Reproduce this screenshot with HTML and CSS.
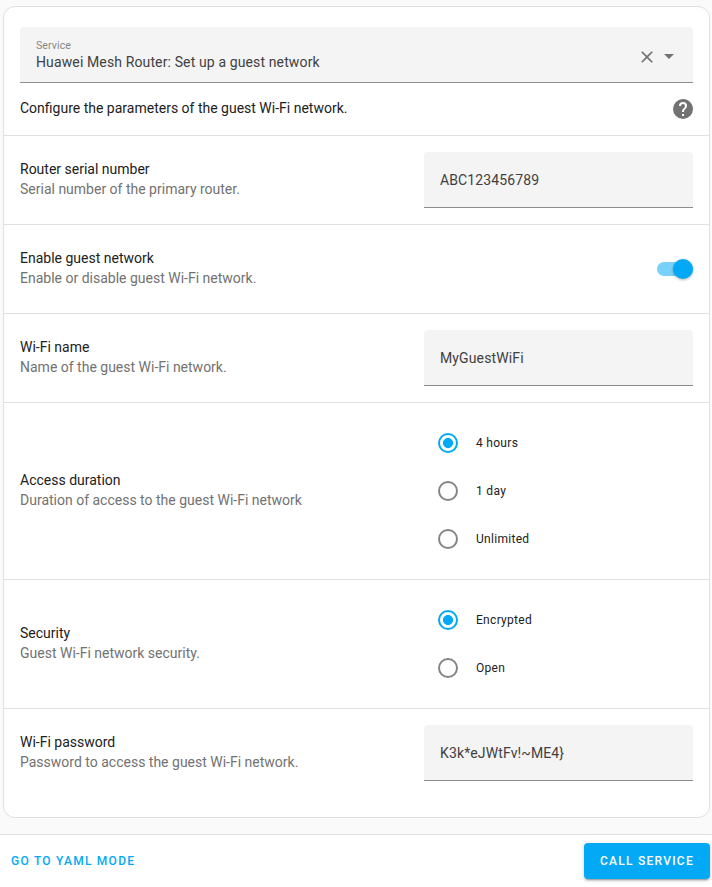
FILE: index.html
```html
<!DOCTYPE html>
<html lang="en">
<head>
<meta charset="utf-8">
<title>Call service</title>
<link rel="stylesheet" href="styles.css">
</head>
<body>
<main class="card">
  <div class="picker field">
    <div class="picker-text">
      <span class="picker-label">Service</span>
      <span class="picker-value">Huawei Mesh Router: Set up a guest network</span>
    </div>
    <svg class="clear" viewBox="0 0 24 24"><path d="M19,6.41L17.59,5L12,10.59L6.41,5L5,6.41L10.59,12L5,17.59L6.41,19L12,13.41L17.59,19L19,17.59L13.41,12L19,6.41Z"/></svg>
    <svg class="arrow" viewBox="0 0 24 24"><path d="M7,10L12,15L17,10H7Z"/></svg>
  </div>
  <div class="intro">
    <p class="intro-text">Configure the parameters of the guest Wi-Fi network.</p>
    <svg class="help" viewBox="0 0 24 24"><path d="M15.07,11.25L14.17,12.17C13.45,12.89 13,13.5 13,15H11V14.5C11,13.39 11.45,12.39 12.17,11.67L13.41,10.41C13.78,10.05 14,9.55 14,9C14,7.89 13.1,7 12,7A2,2 0 0,0 10,9H8A4,4 0 0,1 12,5A4,4 0 0,1 16,9C16,9.88 15.64,10.67 15.07,11.25M13,19H11V17H13M12,2A10,10 0 0,0 2,12A10,10 0 0,0 12,22A10,10 0 0,0 22,12C22,6.47 17.5,2 12,2Z"/></svg>
  </div>
  <section class="row">
    <div class="about"><div class="name">Router serial number</div><div class="desc">Serial number of the primary router.</div></div>
    <div class="control field"><span>ABC123456789</span></div>
  </section>
  <section class="row">
    <div class="about"><div class="name">Enable guest network</div><div class="desc">Enable or disable guest Wi-Fi network.</div></div>
    <div class="switch"><div class="thumb"></div></div>
  </section>
  <section class="row">
    <div class="about"><div class="name">Wi-Fi name</div><div class="desc">Name of the guest Wi-Fi network.</div></div>
    <div class="control field"><span>MyGuestWiFi</span></div>
  </section>
  <section class="row">
    <div class="about"><div class="name">Access duration</div><div class="desc">Duration of access to the guest Wi-Fi network</div></div>
    <div class="control">
      <div class="option"><span class="radio checked"></span><span>4 hours</span></div>
      <div class="option"><span class="radio"></span><span>1 day</span></div>
      <div class="option"><span class="radio"></span><span>Unlimited</span></div>
    </div>
  </section>
  <section class="row">
    <div class="about"><div class="name">Security</div><div class="desc">Guest Wi-Fi network security.</div></div>
    <div class="control">
      <div class="option"><span class="radio checked"></span><span>Encrypted</span></div>
      <div class="option"><span class="radio"></span><span>Open</span></div>
    </div>
  </section>
  <section class="row">
    <div class="about"><div class="name">Wi-Fi password</div><div class="desc">Password to access the guest Wi-Fi network.</div></div>
    <div class="control field"><span>K3k*eJWtFv!~ME4}</span></div>
  </section>
</main>
<footer class="actions">
  <div class="button">GO TO YAML MODE</div>
  <div class="button raised">CALL SERVICE</div>
</footer>
</body>
</html>
```
FILE: styles.css
```css
* { box-sizing: border-box; }
body {
  margin: 0;
  height: 887px;
  padding-top: 6px;
  display: flex;
  flex-direction: column;
  background: #fafafa;
  color: #212121;
  font: 14px/20px Roboto, sans-serif;
  overflow: hidden;
}
.card {
  margin: 0 2px 16px 3px;
  height: 812px;
  flex: none;
  background: #fff;
  border: 1px solid #e0e0e0;
  border-radius: 12px;
}
.field {
  height: 56px;
  display: flex;
  align-items: center;
  padding: 0 16px;
  background: #f4f4f4;
  border-bottom: 1px solid #8c8c8c;
  border-radius: 4px 4px 0 0;
  color: #414141;
  letter-spacing: 0.126px;
}
.picker { margin: 20px 16px 0; }
.picker-text { flex: 1; display: flex; flex-direction: column; padding-top: 2px; }
.picker-label { font-size: 10.5px; line-height: 14px; color: #868686; }
.picker-value { line-height: 20px; margin-top: -1px; padding-bottom: 1px; }
.picker svg, .help { fill: #727272; flex: none; }
.clear { width: 20px; height: 20px; margin: 4px 0 0; }
.arrow { width: 24px; height: 24px; margin: 3px -4px 0 0; }
.intro {
  height: 52px;
  display: flex;
  justify-content: space-between;
  align-items: center;
  padding: 0 14px 0 16px;
}
.intro-text { margin: 0 0 2px; }
.help { width: 24px; height: 24px; }
.row {
  border-top: 1px solid #e0e0e0;
  padding: 16px;
  display: flex;
  align-items: center;
  justify-content: space-between;
  min-height: 89px;
}
.about { padding-bottom: 2px; }
.desc { color: #727272; }
.control { width: 269px; }
.option {
  height: 48px;
  display: flex;
  align-items: center;
  gap: 18px;
  padding-left: 14px;
  font-size: 12px;
  letter-spacing: 0.3px;
}
.radio {
  width: 20px;
  height: 20px;
  border: 2px solid #858585;
  border-radius: 50%;
}
.checked {
  border-color: #03a9f4;
  background: radial-gradient(circle, #03a9f4 4.7px, #fff 5.3px);
}
.switch {
  width: 36px;
  height: 14px;
  border-radius: 7px;
  background: #79d1f9;
  display: flex;
  align-items: center;
  justify-content: flex-end;
}
.thumb {
  width: 20px;
  height: 20px;
  flex: none;
  border-radius: 50%;
  background: #03a9f4;
  box-shadow: 0 1px 3px rgba(0,0,0,.3);
}
.actions {
  flex: 1;
  border-top: 1px solid #e0e0e0;
  background: #fff;
  display: flex;
  justify-content: space-between;
  align-items: flex-start;
  padding: 8px 2px 0 3px;
}
.button {
  height: 36px;
  padding: 0 8px;
  line-height: 36px;
  font-size: 12px;
  font-weight: 500;
  letter-spacing: 1.25px;
  color: #03a9f4;
  white-space: nowrap;
}
.raised {
  width: 126px;
  padding: 0 0 0 16px;
  color: #fff;
  background: #03a9f4;
  border-radius: 4px;
  box-shadow: 0 3px 1px -2px rgba(0,0,0,.2), 0 2px 2px rgba(0,0,0,.14), 0 1px 5px rgba(0,0,0,.12);
}
```
